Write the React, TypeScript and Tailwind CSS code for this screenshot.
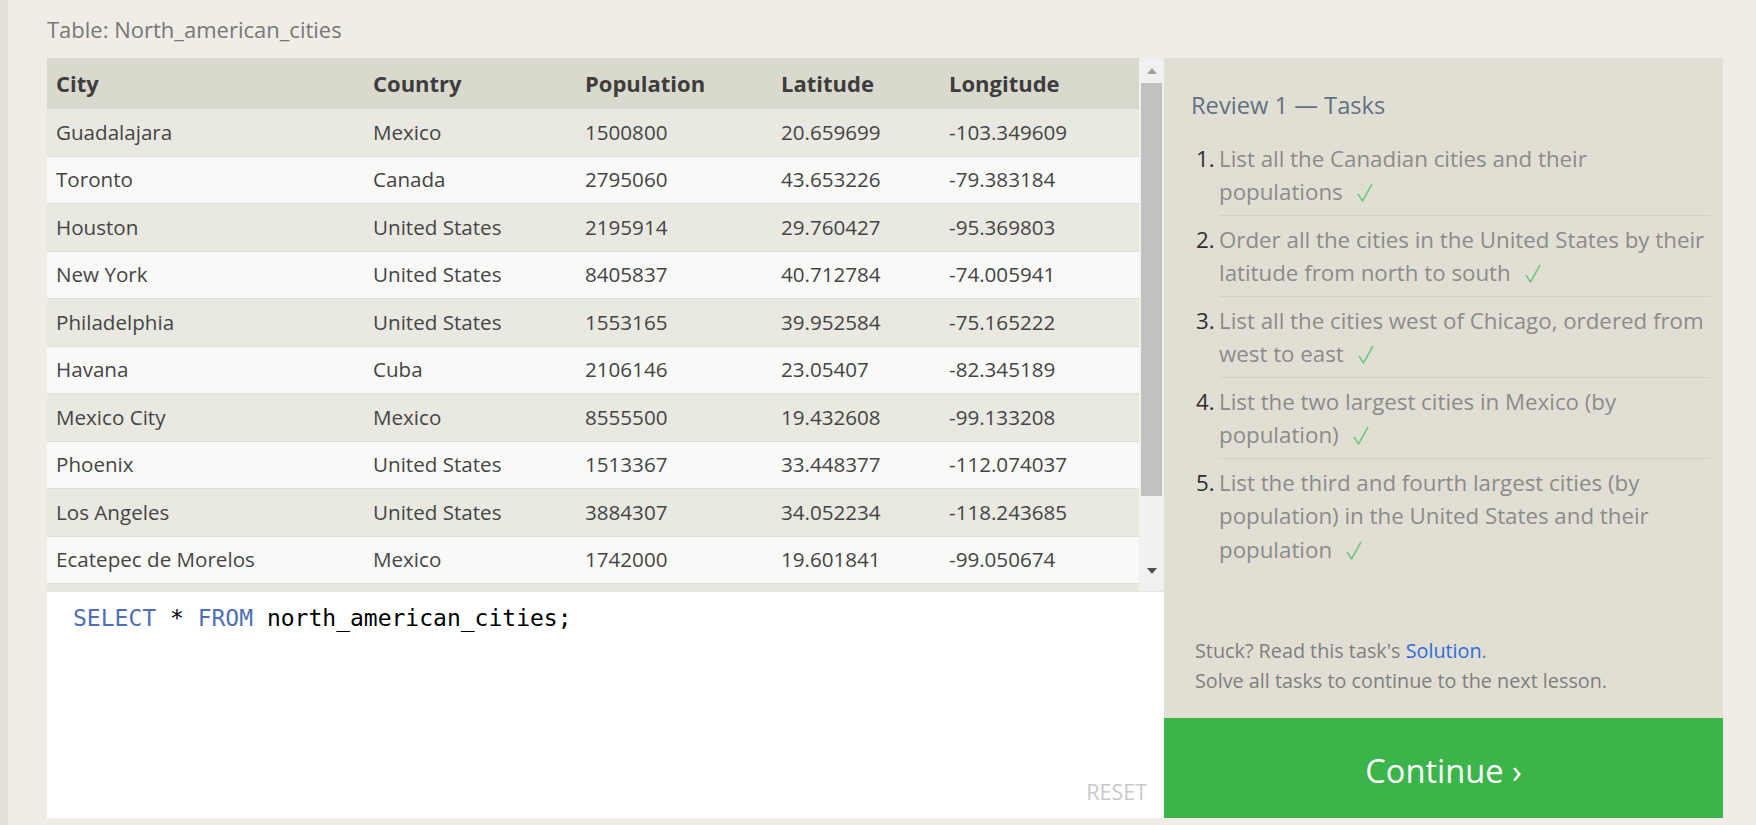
import type { ReactNode } from "react";

const rows = [
  ["Guadalajara", "Mexico", "1500800", "20.659699", "-103.349609"],
  ["Toronto", "Canada", "2795060", "43.653226", "-79.383184"],
  ["Houston", "United States", "2195914", "29.760427", "-95.369803"],
  ["New York", "United States", "8405837", "40.712784", "-74.005941"],
  ["Philadelphia", "United States", "1553165", "39.952584", "-75.165222"],
  ["Havana", "Cuba", "2106146", "23.05407", "-82.345189"],
  ["Mexico City", "Mexico", "8555500", "19.432608", "-99.133208"],
  ["Phoenix", "United States", "1513367", "33.448377", "-112.074037"],
  ["Los Angeles", "United States", "3884307", "34.052234", "-118.243685"],
  ["Ecatepec de Morelos", "Mexico", "1742000", "19.601841", "-99.050674"],
];

const headers = ["City", "Country", "Population", "Latitude", "Longitude"];

const tasks: string[][] = [
  ["List all the Canadian cities and their", "populations"],
  ["Order all the cities in the United States by their", "latitude from north to south"],
  ["List all the cities west of Chicago, ordered from", "west to east"],
  ["List the two largest cities in Mexico (by", "population)"],
  ["List the third and fourth largest cities (by", "population) in the United States and their", "population"],
];

function Check() {
  return (
    <svg width="16" height="19" viewBox="0 0 16 19" className="ml-[14px] inline-block align-[-2px]">
      <path d="M1 11 L5.5 18 L15 1" fill="none" stroke="#74c784" strokeWidth="1.6" strokeLinejoin="round" />
    </svg>
  );
}

function Row({ cells, odd }: { cells: string[]; odd: boolean }) {
  return (
    <div
      className={`grid h-[47.5px] grid-cols-[317px_212px_196px_168px_1fr] items-center border-b border-[#dfded7] ${
        odd ? "bg-[#e9e8e1]" : "bg-[#f9f9f8]"
      }`}
    >
      {cells.map((c, i) => (
        <div key={i} className="pl-[9px] text-[#454545]">
          {c}
        </div>
      ))}
    </div>
  );
}

function Scrollbar() {
  return (
    <div className="flex w-[25px] flex-col items-center bg-[#f1f1f1] pb-[7px]">
      <div className="flex h-[25px] items-center justify-center">
        <svg width="10" height="6" viewBox="0 0 10 6">
          <path d="M0 6 L5 0 L10 6 Z" fill="#a3a3a3" />
        </svg>
      </div>
      <div className="h-[413px] w-[21px] bg-[#c1c1c1]" />
      <div className="flex flex-1 items-end justify-center pb-[10px]">
        <svg width="10" height="6" viewBox="0 0 10 6">
          <path d="M0 0 L5 6 L10 0 Z" fill="#505050" />
        </svg>
      </div>
    </div>
  );
}

function Panel({ children }: { children: ReactNode }) {
  return <div className="flex h-[660px] flex-col bg-[#e1dfd4] pl-[27px] pr-[13px] pt-[31px] pb-[22px]">{children}</div>;
}

export default function App() {
  return (
    <div className="flex h-[825px] overflow-hidden bg-[#f0ede6] font-['Open_Sans',sans-serif] text-[20.6px]">
      <div className="w-[8px] bg-[#e3e0da]" />
      <div className="flex-1 pl-[39px] pr-[33px] pt-[14px]">
        <h2 className="mb-[14px] text-[22px] leading-[30px] text-[#777]">Table: North_american_cities</h2>
        <div className="flex">
          <div className="flex w-[1117px] flex-col">
            <div className="flex h-[533px]">
              <div className="flex w-[1092px] flex-col bg-[#e8e7e0]">
                <div className="grid h-[51px] grid-cols-[317px_212px_196px_168px_1fr] items-center bg-[#d9d9cd] text-[22px] font-bold text-[#3d3d3d]">
                  {headers.map((h) => (
                    <div key={h} className="pl-[9px]">
                      {h}
                    </div>
                  ))}
                </div>
                {rows.map((r, i) => (
                  <Row key={r[0]} cells={r} odd={i % 2 === 0} />
                ))}
              </div>
              <Scrollbar />
            </div>
            <div className="flex h-[227px] flex-col justify-between border-t border-[#e6e5de] bg-white pb-[11px] pl-[26px] pr-[17px] pt-[11px]">
              <div className="font-['DejaVu_Sans_Mono',monospace] text-[23px] leading-[30px] text-black">
                <span className="text-[#4f6fb5]">SELECT</span> * <span className="text-[#4f6fb5]">FROM</span>{" "}
                north_american_cities;
              </div>
              <div className="self-end text-[21.5px] leading-[30px] text-[#c9c9c9]">RESET</div>
            </div>
          </div>
          <div className="flex w-[559px] flex-col">
            <Panel>
              <h3 className="text-[23.7px] leading-[32px] text-[#627181]">Review 1 — Tasks</h3>
              <ol className="mt-[14px] text-[22.3px]">
                {tasks.map((lines, i) => (
                  <li key={i} className="flex leading-[33.5px]">
                    <span className="w-[28px] shrink-0 pl-[5px] pt-[6.5px] text-[#2e2e2e]">{i + 1}.</span>
                    <div
                      className={`flex-1 whitespace-nowrap py-[6.5px] text-[#8b8b8b] ${
                        i < tasks.length - 1 ? "border-b border-[#d3d1c6]" : ""
                      }`}
                    >
                      {lines.map((l, j) => (
                        <div key={j}>
                          {l}
                          {j === lines.length - 1 ? <Check /> : null}
                        </div>
                      ))}
                    </div>
                  </li>
                ))}
              </ol>
              <div className="mt-auto pl-[4px] text-[19.8px] leading-[30px] text-[#7e7e7e]">
                <p>
                  Stuck? Read this task's <a className="text-[#2d6bdb]">Solution</a>.
                </p>
                <p>Solve all tasks to continue to the next lesson.</p>
              </div>
            </Panel>
            <button className="flex h-[100px] items-center justify-center bg-[#3bb44a] pt-[7px] text-[32.6px] text-white">
              Continue ›
            </button>
          </div>
        </div>
      </div>
    </div>
  );
}
